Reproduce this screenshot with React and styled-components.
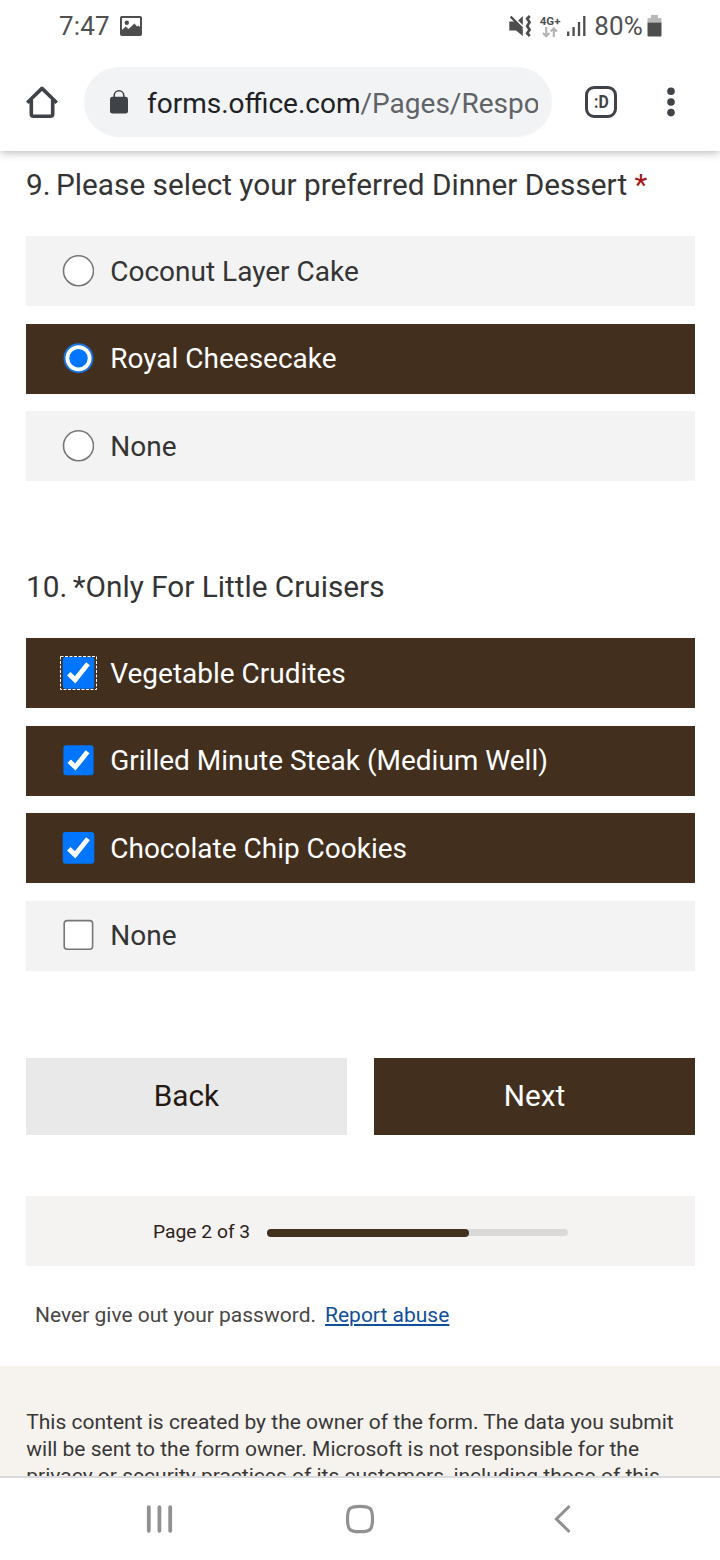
import React from "react";
import styled, { createGlobalStyle, css } from "styled-components";

const BROWN = "#422f1e";

const GlobalStyle = createGlobalStyle`
  * { box-sizing: border-box; }
  html, body { margin: 0; padding: 0; background: #fff; }
  body { font-family: Roboto, "Liberation Sans", sans-serif; color: #343434; overflow: hidden; }
  svg { display: block; flex: none; }
`;

const Screen = styled.div`
  width: 720px;
  height: 1560px;
  display: flex;
  flex-direction: column;
  overflow: hidden;
  background: #fff;
`;

const StatusBar = styled.header`
  height: 52px;
  flex: none;
  display: flex;
  align-items: center;
  justify-content: space-between;
  padding: 0 58.5px 0 59px;
  color: #505050;
  background: #fff;
  position: relative;
  z-index: 2;
`;

const StatusGroup = styled.div`
  display: flex;
  align-items: center;
`;

const StatusText = styled.span`
  font-size: 26px;
  line-height: 30px;
  letter-spacing: 0.2px;
  margin-left: ${(p) => p.$before || 0}px;
  margin-right: ${(p) => p.$after}px;
`;

const Network = styled.div`
  width: 22px;
  display: flex;
  flex-direction: column;
  align-items: center;
  margin: 0 6px 0 8.5px;
`;

const NetworkLabel = styled.span`
  font-size: 11.5px;
  line-height: 12px;
  font-weight: 700;
`;

const Toolbar = styled.nav`
  height: 99px;
  flex: none;
  display: flex;
  align-items: flex-start;
  padding: 15px 37px 0 26px;
  position: relative;
  z-index: 1;
  background: #fff;
  box-shadow: 0 1px 9px rgba(0, 0, 0, 0.32);
`;

const ToolButton = styled.div`
  height: 70px;
  display: flex;
  align-items: center;
  margin-left: ${(p) => p.$before || 0}px;
`;

const AddressBar = styled.div`
  width: 468px;
  height: 70px;
  margin-left: 26px;
  border-radius: 35px;
  background: #f1f3f4;
  display: flex;
  align-items: center;
  padding: 0 14px 0 26px;
`;

const Url = styled.div`
  flex: 1;
  margin-left: 19px;
  overflow: hidden;
  white-space: nowrap;
  font-size: 28px;
  line-height: 36px;
  padding-top: 3px;
  color: #202124;
`;

const UrlPath = styled.span`
  color: #5f6368;
`;

const TabSwitcher = styled.div`
  width: 32px;
  height: 32px;
  border: 3.5px solid #3f4347;
  border-radius: 9px;
  display: flex;
  align-items: center;
  justify-content: center;
  font-size: 18px;
  line-height: 20px;
  font-weight: 700;
  color: #3f4347;
`;

const TabFace = styled.span`
  transform: scaleX(0.88);
`;

const Page = styled.main`
  flex: 1;
  min-height: 0;
  overflow: hidden;
  display: flex;
  flex-direction: column;
`;

const Form = styled.div`
  flex: none;
  height: 1215px;
  padding: 0 25px 0 26px;
`;

const Question = styled.section`
  padding-top: ${(p) => p.$before}px;
`;

const Title = styled.h2`
  margin: 0;
  height: 36px;
  font-size: 29.75px;
  line-height: 36px;
  font-weight: 400;
  white-space: nowrap;
`;

const TitleNumber = styled.span`
  margin-right: 5.5px;
`;

const Required = styled.span`
  color: #a4161a;
`;

const Options = styled.div`
  display: flex;
  flex-direction: column;
  gap: 17.5px;
  padding-top: ${(p) => p.$before}px;
`;

const OptionRow = styled.div`
  height: 70px;
  display: flex;
  align-items: center;
  padding-left: 36px;
  background: ${(p) => (p.$checked ? BROWN : "#f3f3f3")};
  color: ${(p) => (p.$checked ? "#fff" : "#343434")};
`;

const OptionLabel = styled.span`
  font-size: 28px;
  line-height: 34px;
  margin-left: 16.25px;
  padding-top: 1px;
  white-space: nowrap;
`;

const Buttons = styled.div`
  display: grid;
  grid-template-columns: 1fr 1fr;
  column-gap: 27px;
  margin-top: 87.5px;
`;

const Button = styled.div`
  height: 77px;
  display: flex;
  align-items: center;
  justify-content: center;
  padding-bottom: 2px;
  font-size: 29.75px;
  ${(p) =>
    p.$primary
      ? css`
          background: ${BROWN};
          color: #fff;
        `
      : css`
          background: #e9e9e9;
          color: #241a12;
        `}
`;

const Progress = styled.div`
  height: 70px;
  margin-top: 61px;
  padding-left: 127px;
  background: #f4f3f2;
  display: flex;
  align-items: center;
`;

const ProgressLabel = styled.span`
  width: 114px;
  font-size: 19.25px;
  line-height: 24px;
  padding-top: 2px;
  color: #2b211a;
  white-space: nowrap;
`;

const Track = styled.div`
  width: 301px;
  height: 7px;
  margin-top: 3px;
  border-radius: 4px;
  background: #d9d9d8;
`;

const Fill = styled.div`
  height: 8px;
  border-radius: 4px;
  background: ${BROWN};
`;

const Notice = styled.p`
  margin: 35px 0 0 9px;
  font-size: 21px;
  line-height: 28px;
  color: #484644;
  white-space: nowrap;
`;

const Link = styled.a`
  margin-left: 9px;
  color: #104f9a;
  text-decoration: underline;
  text-decoration-thickness: 2px;
  text-underline-offset: 2px;
`;

const Disclaimer = styled.footer`
  flex: none;
  padding: 43px 26px 60px 26.25px;
  background: #f6f3ef;
  font-size: 21px;
  line-height: 27px;
  color: #383736;
  white-space: nowrap;
`;

const NavBar = styled.nav`
  flex: none;
  height: 84px;
  border-top: 2px solid #d9dadd;
  display: flex;
  align-items: center;
  padding: 0 146px 1px;
  background: #fff;
`;

const NavItem = styled.div`
  margin-left: ${(p) => p.$before || 0}px;
`;

const PictureIcon = () => (
  <svg width="22" height="20" viewBox="0 0 22 20">
    <rect x="1" y="1" width="20" height="18" rx="0.8" fill="none" stroke="#4d4d4d" strokeWidth="2" />
    <circle cx="6.8" cy="6.8" r="2.2" fill="#4d4d4d" />
    <path d="M1 15 L5.5 10.5 L8.5 13 L14.5 7.5 L17 10.5 L18.5 9.5 L21 12 V19 H1Z" fill="#4d4d4d" />
  </svg>
);

const MuteIcon = () => (
  <svg width="22" height="22" viewBox="0 0 22 22">
    <path d="M0.3 6.5 H6 L13.8 14.3 V21 L7 15.5 H0.3Z" fill="#4d4d4d" />
    <path d="M13.8 1 V10 L9.2 5.4Z" fill="#4d4d4d" />
    <path d="M1.6 1.6 L13.5 13.5" stroke="#4d4d4d" strokeWidth="2.3" />
    <path d="M20.8 1 L18.2 3.7 L20.6 7.3 L18.2 11 L20.6 14.7 L18.2 18.3 L20.8 21" fill="none" stroke="#4d4d4d" strokeWidth="2.7" />
  </svg>
);

const DataArrows = () => (
  <svg width="16" height="11" viewBox="0 0 16 11">
    <path d="M4.2 0 V8.8 M1 6 L4.2 9.3 L7.4 6 M11.8 10 V1.4 M8.6 4.6 L11.8 1.4 L15 4.6" fill="none" stroke="#b3b3b3" strokeWidth="2.1" />
  </svg>
);

const SignalIcon = () => (
  <svg width="19" height="20" viewBox="0 0 19 20">
    <path d="M1.2 15.5 V20 M6.6 11 V20 M12 6 V20 M17.3 0 V20" stroke="#4d4d4d" strokeWidth="2.3" />
  </svg>
);

const BatteryIcon = () => (
  <svg width="15" height="22" viewBox="0 0 15 22">
    <path d="M4 0 H11 V3 H13.5 Q14.5 3 14.5 4 V7.5 H0.5 V4 Q0.5 3 1.5 3 H4Z" fill="#b9b9b9" />
    <path d="M0.5 7.5 H14.5 V20.5 Q14.5 21.5 13.5 21.5 H1.5 Q0.5 21.5 0.5 20.5Z" fill="#4d4d4d" />
  </svg>
);

const HomeIcon = () => (
  <svg width="32" height="32" viewBox="0 0 32 32">
    <path
      d="M1.2 16.8 L16 2.4 L30.8 16.8 M5.3 14 V28 Q5.3 30.2 7.5 30.2 H24.5 Q26.7 30.2 26.7 28 V14"
      fill="none"
      stroke="#3f4347"
      strokeWidth="3.6"
      strokeLinejoin="round"
    />
  </svg>
);

const LockIcon = () => (
  <svg width="18" height="24" viewBox="0 0 18 24">
    <rect x="0" y="6.8" width="18" height="16.8" rx="2.4" fill="#3f4347" />
    <path d="M4.2 8 V5.6 A4.8 4.8 0 0 1 13.8 5.6 V8" fill="none" stroke="#3f4347" strokeWidth="1.6" />
  </svg>
);

const MenuIcon = () => (
  <svg width="8" height="30" viewBox="0 0 8 30">
    <circle cx="4" cy="4.3" r="3.8" fill="#3f4347" />
    <circle cx="4" cy="15" r="3.8" fill="#3f4347" />
    <circle cx="4" cy="25.6" r="3.8" fill="#3f4347" />
  </svg>
);

const RadioMark = ({ checked }) => (
  <svg width="32" height="32" viewBox="0 0 32 32">
    {checked ? (
      <>
        <circle cx="16.5" cy="15.2" r="14" fill="#fff" stroke="#1a73df" strokeWidth="2" />
        <circle cx="16.5" cy="15.2" r="9.2" fill="#0075ff" />
      </>
    ) : (
      <circle cx="16.5" cy="15.8" r="15" fill="#fff" stroke="#767676" strokeWidth="1.6" />
    )}
  </svg>
);

const FocusRing = styled.rect`
  fill: none;
  stroke: #fff;
  stroke-width: 1;
  stroke-dasharray: 3 1.5;
`;

const CheckMark = ({ checked, focused, large }) => (
  <svg width="32" height="32" viewBox="0 0 32 32" overflow="visible">
    {checked ? (
      <>
        <rect
          x={large ? 0.7 : 1.4}
          y={large ? 0 : 0.2}
          width={large ? 31.6 : 30.2}
          height={large ? 31.8 : 30}
          rx="3"
          fill="#0075ff"
        />
        <path
          d={large ? "M6.8 16.8 L13.1 22.8 L26 6.8" : "M7.2 16.2 L13.3 22 L25.6 6.8"}
          fill="none"
          stroke="#fff"
          strokeWidth="4.9"
        />
      </>
    ) : (
      <rect x="2.2" y="0.6" width="28.4" height="28.6" rx="3" fill="#fff" stroke="#767676" strokeWidth="1.6" />
    )}
    {focused && <FocusRing x="-1.5" y="-0.5" width="36" height="33" />}
  </svg>
);

const RecentsIcon = () => (
  <svg width="27" height="28" viewBox="0 0 27 28">
    <path d="M2.8 2.2 V25.8 M13.4 2.2 V25.8 M24.2 2.2 V25.8" stroke="#919191" strokeWidth="3.8" strokeLinecap="round" />
  </svg>
);

const NavHomeIcon = () => (
  <svg width="30" height="30" viewBox="0 0 30 30">
    <path d="M15 2.3 C25.5 2.3 27.5 4.5 27.5 15 S25.5 27.7 15 27.7 S2.5 25.5 2.5 15 S4.5 2.3 15 2.3Z" fill="none" stroke="#919191" strokeWidth="3.2" />
  </svg>
);

const BackIcon = () => (
  <svg width="17" height="28" viewBox="0 0 17 28">
    <path d="M14.6 2 L2.4 14 L14.6 26" fill="none" stroke="#919191" strokeWidth="3.1" strokeLinecap="round" />
  </svg>
);

const desserts = [
  { label: "Coconut Layer Cake" },
  { label: "Royal Cheesecake", checked: true },
  { label: "None" },
];

const cruiserMeals = [
  { label: "Vegetable Crudites", checked: true, focused: true, large: true },
  { label: "Grilled Minute Steak (Medium Well)", checked: true },
  { label: "Chocolate Chip Cookies", checked: true, large: true },
  { label: "None" },
];

export default function App() {
  return (
    <Screen>
      <GlobalStyle />
      <StatusBar>
        <StatusGroup>
          <StatusText $after={10}>7:47</StatusText>
          <PictureIcon />
        </StatusGroup>
        <StatusGroup>
          <MuteIcon />
          <Network>
            <NetworkLabel>4G+</NetworkLabel>
            <DataArrows />
          </Network>
          <SignalIcon />
          <StatusText $before={8} $after={3.5}>
            80%
          </StatusText>
          <BatteryIcon />
        </StatusGroup>
      </StatusBar>

      <Toolbar>
        <ToolButton>
          <HomeIcon />
        </ToolButton>
        <AddressBar>
          <LockIcon />
          <Url>
            forms.office.com<UrlPath>/Pages/Respo</UrlPath>
          </Url>
        </AddressBar>
        <ToolButton $before={33}>
          <TabSwitcher>
            <TabFace>:D</TabFace>
          </TabSwitcher>
        </ToolButton>
        <ToolButton $before={50}>
          <MenuIcon />
        </ToolButton>
      </Toolbar>

      <Page>
        <Form>
          <Question $before={16}>
            <Title>
              <TitleNumber>9.</TitleNumber>Please select your preferred Dinner Dessert <Required>*</Required>
            </Title>
            <Options $before={33}>
              {desserts.map((o) => (
                <OptionRow key={o.label} $checked={o.checked}>
                  <RadioMark checked={o.checked} />
                  <OptionLabel>{o.label}</OptionLabel>
                </OptionRow>
              ))}
            </Options>
          </Question>

          <Question $before={88}>
            <Title>
              <TitleNumber>10.</TitleNumber>*Only For Little Cruisers
            </Title>
            <Options $before={33}>
              {cruiserMeals.map((o) => (
                <OptionRow key={o.label} $checked={o.checked}>
                  <CheckMark checked={o.checked} focused={o.focused} large={o.large} />
                  <OptionLabel>{o.label}</OptionLabel>
                </OptionRow>
              ))}
            </Options>
          </Question>

          <Buttons>
            <Button>Back</Button>
            <Button $primary>Next</Button>
          </Buttons>

          <Progress>
            <ProgressLabel>Page 2 of 3</ProgressLabel>
            <Track>
              <Fill style={{ width: `${Math.ceil((2 / 3) * 100 * 10) / 10 + 0.4}%` }} />
            </Track>
          </Progress>

          <Notice>
            Never give out your password.<Link>Report abuse</Link>
          </Notice>
        </Form>

        <Disclaimer>
          This content is created by the owner of the form. The data you submit
          <br />
          will be sent to the form owner. Microsoft is not responsible for the
          <br />
          privacy or security practices of its customers, including those of this
        </Disclaimer>
      </Page>

      <NavBar>
        <NavItem>
          <RecentsIcon />
        </NavItem>
        <NavItem $before={172}>
          <NavHomeIcon />
        </NavItem>
        <NavItem $before={179}>
          <BackIcon />
        </NavItem>
      </NavBar>
    </Screen>
  );
}
